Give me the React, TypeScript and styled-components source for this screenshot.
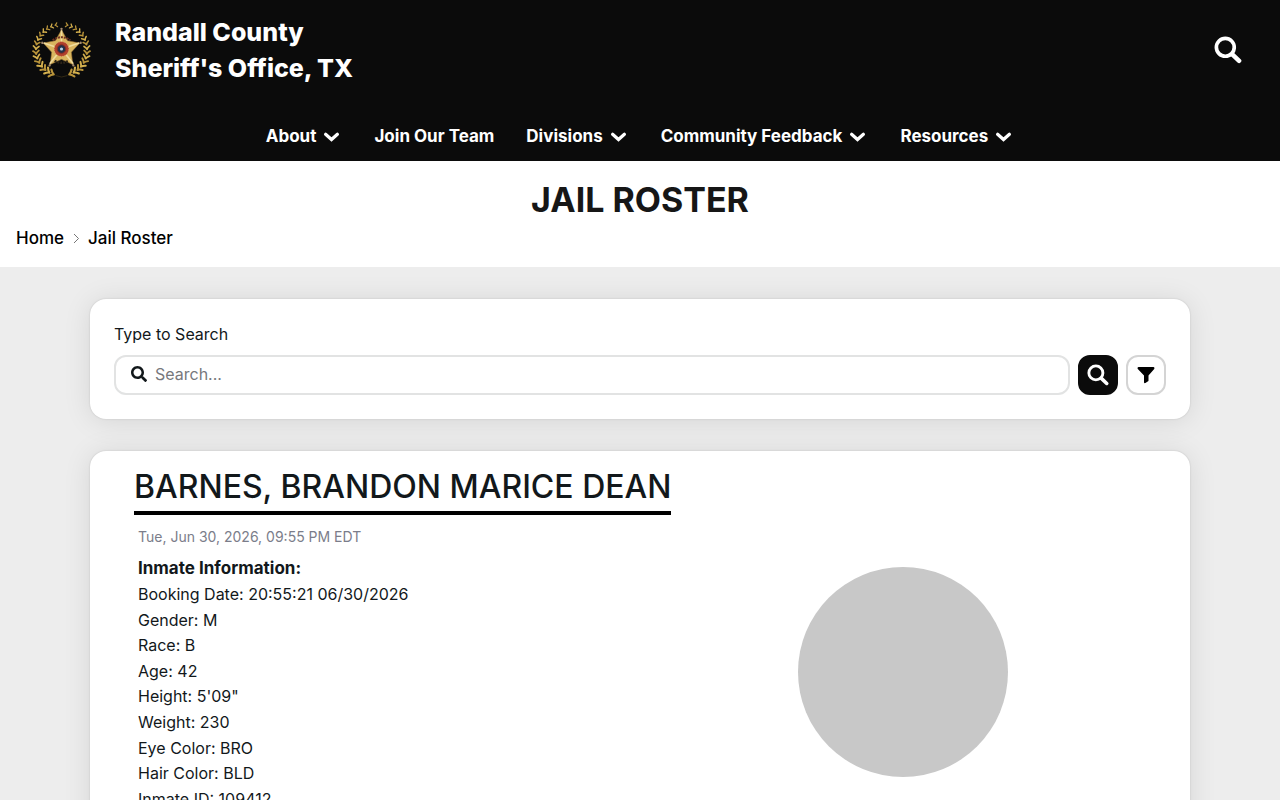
import React from "react";
import styled, { createGlobalStyle, css } from "styled-components";
import { FaSearch } from "react-icons/fa";

const GlobalStyle = createGlobalStyle`
  * { box-sizing: border-box; }
  body {
    margin: 0;
    background: #ededed;
    color: #12181b;
    font-family: Inter, "Liberation Sans", sans-serif;
    font-size: 16px;
  }
  button, input { font: inherit; }
  a { color: inherit; text-decoration: none; }
`;

const Header = styled.header`
  background: #0b0b0b;
  color: #fff;
`;

const BrandRow = styled.div`
  display: flex;
  align-items: center;
  justify-content: space-between;
  padding: 14px 38px 0 32px;
`;

const Brand = styled.a`
  display: flex;
  align-items: center;
  gap: 24px;
  font-size: 25px;
  line-height: 36px;
  font-weight: 800;
`;

const IconButton = styled.button`
  display: flex;
  padding: 4px 0;
  border: 0;
  background: none;
  color: inherit;
  cursor: pointer;
`;

const Nav = styled.nav`
  padding: 30px 16px 5px;
`;

const NavList = styled.ul`
  display: flex;
  flex-wrap: wrap;
  justify-content: center;
  column-gap: 32px;
  margin: 0;
  padding: 0;
  list-style: none;
`;

const NavLink = styled.a`
  display: flex;
  align-items: center;
  gap: 5px;
  font-size: 17px;
  line-height: 40px;
  font-weight: 700;
`;

const TitleBar = styled.section`
  background: #fff;
  padding: 18px 16px 17px;
`;

const PageTitle = styled.h1`
  margin: 0;
  text-align: center;
  text-transform: uppercase;
  color: #161616;
  font-size: 34px;
  line-height: 42px;
  font-weight: 700;
`;

const Crumbs = styled.ol`
  display: flex;
  align-items: center;
  gap: 8px;
  margin: 0;
  padding: 5px 0 0;
  list-style: none;
  color: #000;
  font-size: 17px;
  font-weight: 500;
  line-height: 24px;

  li {
    display: flex;
    align-items: center;
    gap: 8px;
  }
`;

const Main = styled.main`
  display: grid;
  gap: 32px;
  max-width: 1132px;
  margin: 0 auto;
  padding: 32px 16px;
`;

const cardStyle = css`
  background: #fff;
  border-radius: 16px;
  box-shadow: 0 0 2px rgba(0, 0, 0, 0.16), 0 2px 28px rgba(0, 0, 0, 0.1);
`;

const SearchCard = styled.form`
  ${cardStyle}
  padding: 23px 24px 24px;
`;

const SearchLabel = styled.label`
  display: block;
  line-height: 24px;
  margin-bottom: 9px;
`;

const SearchRow = styled.div`
  display: flex;
  gap: 8px;
`;

const SearchField = styled.div`
  flex: 1;
  display: flex;
  align-items: center;
  gap: 8px;
  height: 40px;
  padding: 0 15px 2px;
  border: 2px solid #e2e3e3;
  border-radius: 12px;
`;

const SearchInput = styled.input`
  flex: 1;
  min-width: 0;
  padding: 0;
  border: 0;
  outline: 0;
  background: none;
  color: inherit;

  &::placeholder {
    color: #77787c;
    opacity: 1;
  }
`;

const SquareButton = styled.button<{ $solid?: boolean }>`
  display: flex;
  align-items: center;
  justify-content: center;
  width: 40px;
  height: 40px;
  padding: 0;
  border: 2px solid ${(p) => (p.$solid ? "#0b0b0b" : "#d4d4d4")};
  border-radius: 12px;
  background: ${(p) => (p.$solid ? "#0b0b0b" : "#fff")};
  color: ${(p) => (p.$solid ? "#fff" : "#000")};
  cursor: pointer;
`;

const InmateCard = styled.article`
  ${cardStyle}
  padding: 18px 24px 24px;
`;

const InmateName = styled.h2`
  width: fit-content;
  margin: 0 20px 12px;
  padding-bottom: 6px;
  border-bottom: 4px solid #000;
  font-size: 32px;
  line-height: 36px;
  font-weight: 500;
`;

const Columns = styled.div`
  display: grid;
  grid-template-columns: 1fr 1fr;
`;

const Details = styled.div`
  padding-left: 24px;
`;

const BookedAt = styled.time`
  display: block;
  color: #7b7d8a;
  font-size: 14px;
  line-height: 20px;
  margin-bottom: 8px;
`;

const FactsHeading = styled.h3`
  margin: 0;
  font-size: 17px;
  line-height: 27px;
  font-weight: 700;
`;

const Facts = styled.ul`
  margin: 0;
  padding: 0;
  list-style: none;
  line-height: 1.6;
`;

const Portrait = styled.div`
  width: 210px;
  height: 210px;
  margin: 40px auto 0;
  border-radius: 50%;
  background: #c8c8c8;
`;

const starPoints = (r: number, inner: number) =>
  Array.from({ length: 10 }, (_, i) => {
    const a = (-90 + i * 36) * (Math.PI / 180);
    const d = i % 2 ? inner : r;
    return `${(30 + d * Math.cos(a)).toFixed(1)},${(29 + d * Math.sin(a)).toFixed(1)}`;
  }).join(" ");

const leaves = Array.from({ length: 15 }, (_, i) => 12 + i * 10.4);

const Badge = () => (
  <svg width="59" height="60" viewBox="0 0 60 60" aria-hidden="true">
    {[1, -1].map((side) => (
      <g key={side} transform={side === 1 ? undefined : "matrix(-1 0 0 1 60 0)"}>
        {leaves.map((deg, i) => (
          <g
            key={deg}
            transform={`rotate(${deg} 30 30) translate(30 4) scale(${0.75 + i * 0.045})`}
            fill="none"
            stroke={i % 2 ? "#d4b04e" : "#b8933a"}
            strokeWidth="1.6"
            strokeLinecap="round"
          >
            <path d="M1.600 0Q0-.6-1.400-2.700M1.600 0Q0 .6-1.400 2.700" />
          </g>
        ))}
      </g>
    ))}
    <path d="M24 56q6 3 12 0" fill="none" stroke="#4c3d1c" strokeWidth=".6" />
    <polygon points={starPoints(19.5, 10.5)} fill="#d9b55e" stroke="#9a7434" strokeWidth=".6" />
    <path d="M30 10v19L18 44M30 29 12 23M30 29l18-6M30 29l12 15" stroke="#f0dc9e" strokeWidth="1.6" fill="none" />
    <path d="M21 20q9-6 18 0" fill="none" stroke="#6d3022" strokeWidth="2" strokeDasharray="2 1" />
    <path d="M23 41q7 4 14 0" fill="none" stroke="#2c2418" strokeWidth="2.4" strokeDasharray="2 1" />
    <circle cx="30" cy="29" r="7.6" fill="#b0402c" stroke="#ddb46e" strokeDasharray="1.5 1" />
    <circle cx="30" cy="29" r="4.4" fill="#263248" stroke="#8a2b22" />
    <circle cx="30" cy="29" r="1.6" fill="#b9d3e6" />
    {[0, 72, 144, 216, 288].map((deg) => (
      <circle key={deg} cx="30" cy="8.5" r="1.2" fill="#a58b70" transform={`rotate(${deg} 30 29)`} />
    ))}
  </svg>
);

const SearchGlyph = ({ size }: { size: number }) => (
  <svg width={size} height={size} viewBox="0 0 26 26" fill="none" stroke="currentColor" aria-hidden="true">
    <circle cx="10.5" cy="10.500" r="8.300" strokeWidth="3.400" />
    <path d="m17 17 6.300 6" strokeWidth="4.200" strokeLinecap="round" />
  </svg>
);

const FunnelGlyph = () => (
  <svg width="18" height="18" viewBox="0 0 18 18" fill="currentColor" aria-hidden="true">
    <path d="M1.600 1h14.800c1 0 1.400 1.200.8 1.900L11.500 9.400v5.200c0 .3-.1.500-.4.700L8.400 17c-.7.400-1.400 0-1.400-.8V9.400L.8 2.900C.2 2.200.6 1 1.600 1Z" />
  </svg>
);

const Chevron = () => (
  <svg width="21" height="20" viewBox="0 0 21 20" fill="none" stroke="currentColor" strokeWidth="3.2" strokeLinecap="round" aria-hidden="true">
    <path d="m4.600 8.200 5.900 5.300 5.900-5.300" />
  </svg>
);

const navItems = [
  { label: "About", menu: true },
  { label: "Join Our Team", menu: false },
  { label: "Divisions", menu: true },
  { label: "Community Feedback", menu: true },
  { label: "Resources", menu: true },
];

const facts = [
  "Booking Date: 20:55:21 06/30/2026",
  "Gender: M",
  "Race: B",
  "Age: 42",
  "Height: 5'09\"",
  "Weight: 230",
  "Eye Color: BRO",
  "Hair Color: BLD",
  "Inmate ID: 109412",
];

export default function App() {
  return (
    <>
      <GlobalStyle />
      <Header>
        <BrandRow>
          <Brand href="#home">
            <Badge />
            <span>
              Randall County
              <br />
              Sheriff's Office, TX
            </span>
          </Brand>
          <IconButton type="button" aria-label="Search site">
            <SearchGlyph size={28} />
          </IconButton>
        </BrandRow>
        <Nav aria-label="Main">
          <NavList>
            {navItems.map((item) => (
              <li key={item.label}>
                <NavLink href="#nav">
                  {item.label}
                  {item.menu && <Chevron />}
                </NavLink>
              </li>
            ))}
          </NavList>
        </Nav>
      </Header>
      <TitleBar>
        <PageTitle>Jail Roster</PageTitle>
        <nav aria-label="Breadcrumb">
          <Crumbs>
            <li>
              <a href="#home">Home</a>
              <svg width="8" height="12" viewBox="0 0 8 12" fill="none" stroke="#666" strokeWidth=".9" aria-hidden="true">
                <path d="m2 2 4.500 4.500L2 11" />
              </svg>
            </li>
            <li>
              <a href="#roster" aria-current="page">Jail Roster</a>
            </li>
          </Crumbs>
        </nav>
      </TitleBar>
      <Main>
        <SearchCard role="search">
          <SearchLabel htmlFor="roster-search">Type to Search</SearchLabel>
          <SearchRow>
            <SearchField>
              <FaSearch size={16} aria-hidden="true" />
              <SearchInput id="roster-search" type="text" placeholder="Search..." />
            </SearchField>
            <SquareButton $solid type="button" aria-label="Search">
              <SearchGlyph size={22} />
            </SquareButton>
            <SquareButton type="button" aria-label="Filter">
              <FunnelGlyph />
            </SquareButton>
          </SearchRow>
        </SearchCard>
        <InmateCard>
          <InmateName>BARNES, BRANDON MARICE DEAN</InmateName>
          <Columns>
            <Details>
              <BookedAt dateTime="2026-06-30T21:55-04:00">Tue, Jun 30, 2026, 09:55 PM EDT</BookedAt>
              <FactsHeading>Inmate Information:</FactsHeading>
              <Facts>
                {facts.map((fact) => (
                  <li key={fact}>{fact}</li>
                ))}
              </Facts>
            </Details>
            <Portrait role="img" aria-label="Inmate photo" />
          </Columns>
        </InmateCard>
      </Main>
    </>
  );
}
